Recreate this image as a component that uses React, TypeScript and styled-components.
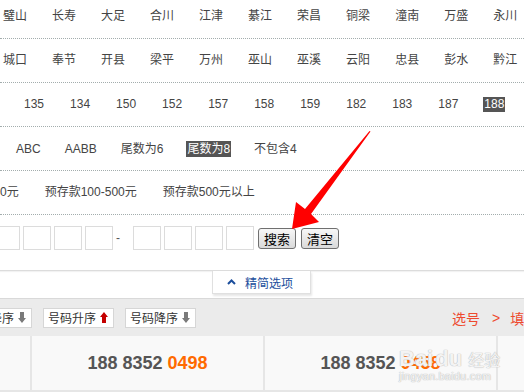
import React from "react";
import styled, { createGlobalStyle } from "styled-components";

const GlobalStyle = createGlobalStyle`
  html, body { margin: 0; padding: 0; background: #fff; overflow: hidden; }
  body { font-family: "Liberation Sans", "Noto Sans CJK SC", sans-serif; font-size: 12px; color: #444; }
`;

const Page = styled.div`
  position: relative;
  width: 524px;
  height: 392px;
  overflow: hidden;
`;

const FilterPanel = styled.div`
  margin-top: -5px;
  border-bottom: 1px solid #dcdcdc;
  box-shadow: 0 1px 1px rgba(0, 0, 0, 0.05);
`;

const Row = styled.div<{ $gap: number; $left: number }>`
  box-sizing: border-box;
  height: 44px;
  border-bottom: 1px dotted #a3adad;
  display: flex;
  align-items: center;
  gap: ${(p) => p.$gap}px;
  padding-left: ${(p) => p.$left}px;
  white-space: nowrap;
`;

const Item = styled.span<{ $on?: boolean; $tall?: number }>`
  line-height: ${(p) => p.$tall ?? 15}px;
  color: ${(p) => (p.$on ? "#fff" : "#444")};
  background: ${(p) => (p.$on ? "#555" : "transparent")};
  padding: ${(p) => (p.$on ? "0 1px" : "0")};
  margin: ${(p) => (p.$on ? "0 -1px" : "0")};
  flex-shrink: 0;
`;

const InputRow = styled.div`
  box-sizing: border-box;
  height: 55px;
  padding-top: 11px;
  margin-left: -8px;
  display: flex;
  align-items: center;
  align-content: flex-start;
  flex-wrap: wrap;
`;

const Line = styled.div`
  display: flex;
  align-items: center;
  height: 24px;
`;

const DigitGroup = styled.div`
  display: flex;
  gap: 3px;
`;

const DigitBox = styled.div`
  box-sizing: border-box;
  width: 28px;
  height: 24px;
  border: 1px solid #dcdcdc;
  background: #fff;
`;

const Dash = styled.span`
  width: 4px;
  margin: 0 13px 0 3px;
  color: #555;
  line-height: 12px;
`;

const Btn = styled.button<{ $ml: number }>`
  box-sizing: border-box;
  height: 21px;
  padding: 0 5px;
  margin-left: ${(p) => p.$ml}px;
  border: 1px solid #707070;
  border-radius: 3px;
  background: linear-gradient(#f7f7f7, #dadada);
  font-family: "Noto Sans CJK SC", sans-serif;
  font-size: 13px;
  line-height: 19px;
  color: #000;
`;

const TabBar = styled.div`
  height: 27px;
  display: flex;
  justify-content: center;
  padding-left: 0;
`;

const Tab = styled.div`
  box-sizing: border-box;
  width: 99px;
  height: 23px;
  margin-left: -1px;
  border: 1px solid #e0e0e0;
  border-top: none;
  background: #fff;
  box-shadow: 1px 2px 2px rgba(0, 0, 0, 0.1);
  display: flex;
  align-items: center;
  padding-left: 14px;
  gap: 9px;
  color: #1b4e9c;
  font-size: 12px;
`;

const Toolbar = styled.div`
  box-sizing: border-box;
  height: 38px;
  background: #ebebeb;
  border-top: 1px solid #d9d9d9;
  display: flex;
  align-items: center;
  white-space: nowrap;
`;

const SortGroup = styled.div`
  display: flex;
  gap: 11px;
  margin-left: -39px;
  flex-shrink: 0;
`;

const SortBtn = styled.div`
  box-sizing: border-box;
  height: 20px;
  width: 71px;
  border: 1px solid #d6d6d6;
  background: #fff;
  display: flex;
  align-items: center;
  padding: 0 5px 0 4px;
  gap: 4px;
  color: #333;
  font-size: 12px;
`;

const Steps = styled.div`
  margin-left: 256px;
  flex-shrink: 0;
  color: #ee4a2f;
  font-size: 14px;
  display: flex;
  align-items: center;
`;

const StepSep = styled.span`
  margin: 0 10px 0 12px;
  font-family: "Liberation Sans", sans-serif;
`;

const Grid = styled.div`
  display: grid;
  grid-template-columns: repeat(4, 231px);
  column-gap: 2px;
  margin-left: -201px;
  background: #e6e6e6;
  padding-bottom: 2px;
`;

const Cell = styled.div`
  height: 54px;
  background: #f9f9f9;
  display: flex;
  align-items: center;
  justify-content: center;
  font-family: "Liberation Sans", sans-serif;
  font-weight: bold;
  font-size: 18px;
  color: #555;
  white-space: pre;
`;

const Tail = styled.span`
  color: #ff6a00;
`;

const Overlay = styled.svg`
  position: absolute;
  left: 0;
  top: 0;
  pointer-events: none;
`;

const Watermark = styled.div`
  position: absolute;
  left: 399px;
  top: 336px;
  color: rgba(255, 255, 255, 0.85);
  text-shadow: 0 0 1px #b8b8b8, 0 0 1px #b8b8b8;
  font-family: "Liberation Sans", "Noto Sans CJK SC", sans-serif;
  pointer-events: none;
  line-height: 1;
`;

const WmMain = styled.div`
  font-size: 22px;
  font-weight: bold;
  display: flex;
  align-items: baseline;
  gap: 2px;
  margin-top: 12px;
`;

const WmCn = styled.span`
  font-size: 16px;
  font-weight: normal;
  margin-left: 4px;
`;

const WmUrl = styled.div`
  font-size: 11px;
  margin-top: 1px;
  letter-spacing: 0.2px;
`;

const Arrow = ({ up }: { up: boolean }) => (
  <svg width="8" height="11" viewBox="0 0 8 11">
    {up ? (
      <polygon points="4,0 8,5 6,5 6,11 2,11 2,5 0,5" fill="#c40000" />
    ) : (
      <polygon points="2,0 6,0 6,6 8,6 4,11 0,6 2,6" fill="#7a7a7a" />
    )}
  </svg>
);

const row1 = ["璧山", "长寿", "大足", "合川", "江津", "綦江", "荣昌", "铜梁", "潼南", "万盛", "永川"];
const row2 = ["城口", "奉节", "开县", "梁平", "万州", "巫山", "巫溪", "云阳", "忠县", "彭水", "黔江"];
const row3 = ["135", "134", "150", "152", "157", "158", "159", "182", "183", "187", "188"];
const row4 = ["ABC", "AABB", "尾数为6", "尾数为8", "不包含4"];
const row5 = ["0元", "预存款100-500元", "预存款500元以上"];

export default function App() {
  return (
    <Page>
      <GlobalStyle />
      <FilterPanel>
        <Row $gap={25} $left={3}>
          {row1.map((t) => (
            <Item key={t}>{t}</Item>
          ))}
        </Row>
        <Row $gap={25} $left={3}>
          {row2.map((t) => (
            <Item key={t}>{t}</Item>
          ))}
        </Row>
        <Row $gap={26} $left={24}>
          {row3.map((t) => (
            <Item key={t} $on={t === "188"}>
              {t}
            </Item>
          ))}
        </Row>
        <Row $gap={24} $left={16}>
          {row4.map((t) => (
            <Item key={t} $on={t === "尾数为8"} $tall={16}>
              {t}
            </Item>
          ))}
        </Row>
        <Row $gap={26} $left={0}>
          {row5.map((t) => (
            <Item key={t}>{t}</Item>
          ))}
        </Row>
        <InputRow>
          <Line>
            <DigitGroup>
              {[0, 1, 2, 3].map((i) => (
                <DigitBox key={i} />
              ))}
            </DigitGroup>
            <Dash>-</Dash>
            <DigitGroup>
              {[0, 1, 2, 3].map((i) => (
                <DigitBox key={i} />
              ))}
            </DigitGroup>
            <Btn $ml={4}>搜索</Btn>
            <Btn $ml={5}>清空</Btn>
          </Line>
        </InputRow>
      </FilterPanel>
      <TabBar>
        <Tab>
          <svg width="9" height="6" viewBox="0 0 9 6">
            <polyline points="1,5 4.5,1.5 8,5" fill="none" stroke="#1b4e9c" strokeWidth="2" />
          </svg>
          <span>精简选项</span>
        </Tab>
      </TabBar>
      <Toolbar>
        <SortGroup>
          <SortBtn>
            <span>价格降序</span>
            <Arrow up={false} />
          </SortBtn>
          <SortBtn>
            <span>号码升序</span>
            <Arrow up />
          </SortBtn>
          <SortBtn>
            <span>号码降序</span>
            <Arrow up={false} />
          </SortBtn>
        </SortGroup>
        <Steps>
          <span>选号</span>
          <StepSep>&gt;</StepSep>
          <span>填写资料</span>
        </Steps>
      </Toolbar>
      <Grid>
        <Cell>
          188 8352 <Tail>0468</Tail>
        </Cell>
        <Cell>
          188 8352 <Tail>0498</Tail>
        </Cell>
        <Cell>
          188 8352 <Tail>0458</Tail>
        </Cell>
        <Cell>
          188 8352 <Tail>0478</Tail>
        </Cell>
      </Grid>
      <Watermark>
        <WmMain>
          <span>Bai</span>
          <span>du</span>
          <WmCn>经验</WmCn>
        </WmMain>
        <WmUrl>jingyan.baidu.com</WmUrl>
      </Watermark>
      <Overlay width="524" height="392" viewBox="0 0 524 392">
        <polygon
          points="370.5,131.5 311,214 319,222 292,229 296,202 305,209 369.5,131"
          fill="#f00"
        />
      </Overlay>
    </Page>
  );
}
